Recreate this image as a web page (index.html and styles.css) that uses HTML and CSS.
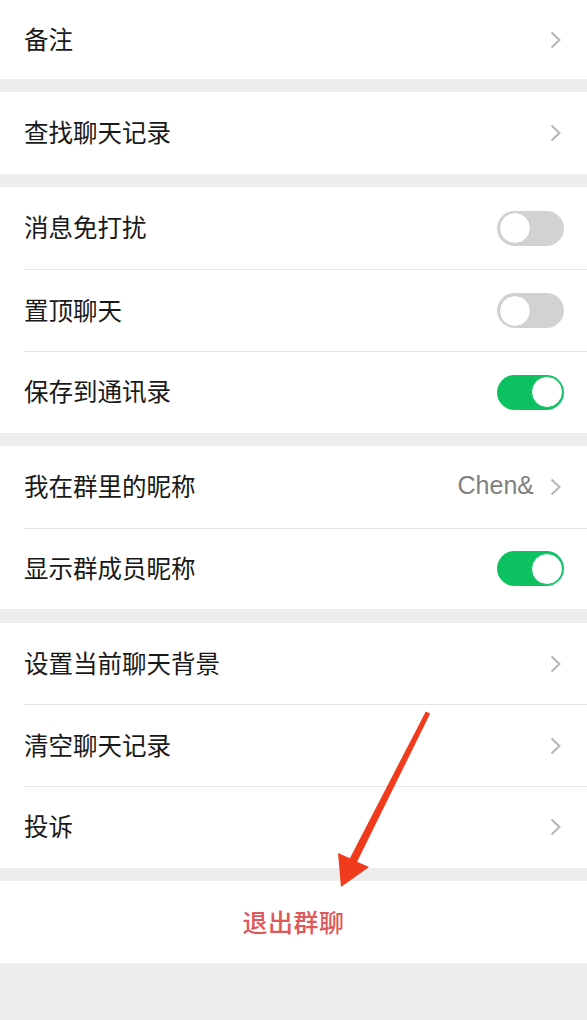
FILE: index.html
```html
<!DOCTYPE html>
<html lang="zh-CN">
<head>
  <meta charset="UTF-8" />
  <meta name="viewport" content="width=device-width, initial-scale=1.0" />
  <title>聊天信息</title>
  <link rel="stylesheet" href="styles.css">
</head>
<body>
  <div class="page">
    <div class="group">
      <div class="row row-first">
        <span class="label">备注</span>
        <svg class="chevron" viewBox="0 0 11 18"><polyline points="1.5,1.5 9.5,9 1.5,16.5" /></svg>
      </div>
    </div>

    <div class="group">
      <div class="row">
        <span class="label">查找聊天记录</span>
        <svg class="chevron" viewBox="0 0 11 18"><polyline points="1.5,1.5 9.5,9 1.5,16.5" /></svg>
      </div>
    </div>

    <div class="group">
      <div class="row">
        <span class="label">消息免打扰</span>
        <span class="switch"><span class="knob"></span></span>
      </div>
      <div class="row">
        <span class="label">置顶聊天</span>
        <span class="switch"><span class="knob"></span></span>
      </div>
      <div class="row">
        <span class="label">保存到通讯录</span>
        <span class="switch on"><span class="knob"></span></span>
      </div>
    </div>

    <div class="group">
      <div class="row">
        <span class="label">我在群里的昵称</span>
        <span class="value">Chen&amp;</span>
        <svg class="chevron" viewBox="0 0 11 18"><polyline points="1.5,1.5 9.5,9 1.5,16.5" /></svg>
      </div>
      <div class="row">
        <span class="label">显示群成员昵称</span>
        <span class="switch on"><span class="knob"></span></span>
      </div>
    </div>

    <div class="group">
      <div class="row">
        <span class="label">设置当前聊天背景</span>
        <svg class="chevron" viewBox="0 0 11 18"><polyline points="1.5,1.5 9.5,9 1.5,16.5" /></svg>
      </div>
      <div class="row">
        <span class="label">清空聊天记录</span>
        <svg class="chevron" viewBox="0 0 11 18"><polyline points="1.5,1.5 9.5,9 1.5,16.5" /></svg>
      </div>
      <div class="row">
        <span class="label">投诉</span>
        <svg class="chevron" viewBox="0 0 11 18"><polyline points="1.5,1.5 9.5,9 1.5,16.5" /></svg>
      </div>
    </div>

    <div class="group group-exit">
      <button type="button" class="exit">退出群聊</button>
    </div>

    <svg class="arrow" viewBox="0 0 587 1020" width="587" height="1020">
      <polygon points="425.8,711.4 430.2,713.6 357.1,861.8 369,867 341,887 338,853 349.9,858.2" />
    </svg>
  </div>
</body>
</html>
```

FILE: styles.css
```css
body {
  margin: 0;
  background: #ededed;
  font-family: 'Liberation Sans', 'Noto Sans CJK SC', sans-serif;
  color: #191919;
}

.page {
  position: relative;
  width: 587px;
  min-height: 1020px;
  overflow: hidden;
}

.group {
  background: #fff;
  padding-left: 24px;
  margin-bottom: 13.4px;
}

.row {
  display: flex;
  align-items: center;
  height: 81.7px;
  box-sizing: border-box;
  padding-right: 23px;
}

.row + .row {
  border-top: 1px solid #e5e5e5;
}

.row-first {
  height: 79px;
}

.label {
  flex: 1;
  font-size: 24.5px;
  padding-bottom: 3px;
}

.value {
  font-size: 25px;
  color: #808080;
  margin-right: 16px;
  padding-bottom: 2px;
}

.chevron {
  width: 11px;
  height: 18px;
  margin-right: 3px;
  fill: none;
  stroke: #b5b5b5;
  stroke-width: 2;
}

.switch {
  display: flex;
  justify-content: flex-start;
  width: 67px;
  height: 35px;
  padding: 1.5px;
  box-sizing: border-box;
  border-radius: 18px;
  background: #d2d2d2;
}

.switch.on {
  justify-content: flex-end;
  background: #0dc160;
}

.knob {
  width: 32px;
  height: 32px;
  box-sizing: border-box;
  border-radius: 50%;
  background: #fff;
  border: 1px solid #c8c8c8;
}

.switch.on .knob {
  border-color: #0dc160;
}

.group-exit {
  padding-left: 0;
}

.exit {
  display: block;
  width: 100%;
  height: 81.7px;
  padding-bottom: 3px;
  border: none;
  background: none;
  font-family: 'Noto Sans CJK SC', sans-serif;
  font-size: 25px;
  font-weight: 500;
  color: #de5959;
  letter-spacing: 0.5px;
  cursor: pointer;
}

.arrow {
  position: absolute;
  top: 0;
  left: 0;
  pointer-events: none;
  fill: #f03b1d;
}
```
